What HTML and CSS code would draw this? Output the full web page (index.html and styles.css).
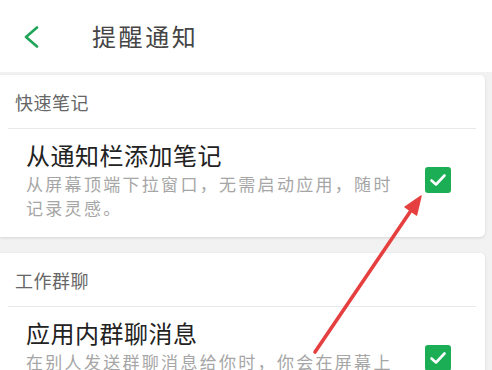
FILE: index.html
```
<!DOCTYPE html>
<html lang="zh-CN">
<head>
<meta charset="utf-8">
<title>提醒通知</title>
<link rel="stylesheet" href="styles.css">
</head>
<body>
<header class="topbar">
  <svg class="back" width="16" height="22" viewBox="0 0 16 22"><polyline points="14,1.5 3,11 14,20.5" fill="none" stroke="#1fa558" stroke-width="2.6" stroke-linecap="round" stroke-linejoin="round"/></svg>
  <h1 class="title">提醒通知</h1>
</header>
<main class="content">
  <section class="card">
    <div class="section-head">快速笔记</div>
    <div class="divider"></div>
    <div class="item">
      <div class="item-text">
        <div class="item-title">从通知栏添加笔记</div>
        <div class="item-desc">从屏幕顶端下拉窗口，无需启动应用，随时记录灵感。</div>
      </div>
      <div class="check"><svg width="26" height="26" viewBox="0 0 26 26"><polyline points="6.5,13.5 11,17.5 19.5,8.5" fill="none" stroke="#fff" stroke-width="2.6" stroke-linecap="round" stroke-linejoin="round"/></svg></div>
    </div>
  </section>
  <section class="card">
    <div class="section-head">工作群聊</div>
    <div class="divider"></div>
    <div class="item">
      <div class="item-text">
        <div class="item-title">应用内群聊消息</div>
        <div class="item-desc">在别人发送群聊消息给你时，你会在屏幕上方看到提醒。</div>
      </div>
      <div class="check"><svg width="26" height="26" viewBox="0 0 26 26"><polyline points="6.5,13.5 11,17.5 19.5,8.5" fill="none" stroke="#fff" stroke-width="2.6" stroke-linecap="round" stroke-linejoin="round"/></svg></div>
    </div>
  </section>
</main>
<svg class="arrow" width="492" height="370" viewBox="0 0 492 370">
  <line x1="315" y1="352" x2="412" y2="209" stroke="#e5403f" stroke-width="3.6" stroke-linecap="round"/>
  <polygon points="421,196 416.5,215 405,207" fill="#e5403f" stroke="#e5403f" stroke-width="1.5" stroke-linejoin="round"/>
</svg>
</body>
</html>
```
FILE: styles.css
```
html, body {
  margin: 0;
  padding: 0;
}
body {
  background: #f2f2f2;
  font-family: "Noto Sans CJK SC", "Noto Sans", sans-serif;
  width: 492px;
  height: 370px;
  overflow: hidden;
  position: relative;
}
.topbar {
  height: 72px;
  background: #fff;
  display: flex;
  align-items: center;
  margin-bottom: 3px;
}
.back {
  margin-left: 23px;
  margin-top: 2px;
}
.title {
  margin: 0 0 0 53px;
  font-size: 24px;
  font-weight: 400;
  letter-spacing: 2.6px;
  color: #454545;
  line-height: 30px;
}
.content {
  display: flex;
  flex-direction: column;
  gap: 16px;
}
.card {
  background: #fff;
  margin-right: 7px;
  border-radius: 0 5px 5px 0;
  box-shadow: 0 1px 3px rgba(0,0,0,0.12);
}
.section-head {
  height: 53px;
  display: flex;
  align-items: center;
  padding-left: 15px;
  font-size: 18px;
  color: #666;
  letter-spacing: 0.5px;
}
.divider {
  height: 1px;
  background: #e8e8e8;
  margin: 0 9px 0 8px;
}
.item {
  display: flex;
  align-items: flex-start;
  padding: 12px 0 17px 26px;
}
.item-text {
  width: 382px;
}
.item-title {
  font-size: 24px;
  line-height: 28px;
  color: #222;
  letter-spacing: 0.5px;
}
.item-desc {
  margin-top: 3px;
  font-size: 17px;
  line-height: 24px;
  color: #a6a6a6;
  letter-spacing: 2.3px;
}
.check {
  width: 26px;
  height: 26px;
  margin-left: 17px;
  margin-top: 26px;
  background: #1bae55;
  border-radius: 3px;
  display: flex;
}
.arrow {
  position: absolute;
  left: 0;
  top: 0;
  pointer-events: none;
}
```
